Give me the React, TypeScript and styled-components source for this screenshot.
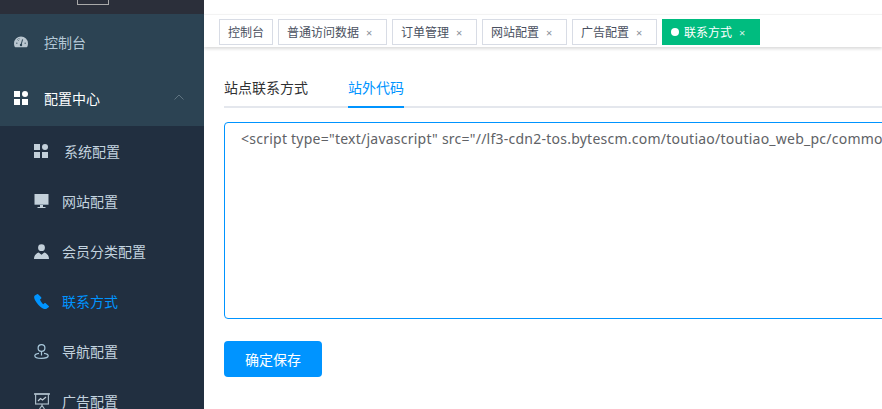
import { ReactNode } from 'react';
import styled, { createGlobalStyle } from 'styled-components';

const GlobalStyle = createGlobalStyle`
  html, body {
    margin: 0;
    padding: 0;
    height: 100%;
    overflow: hidden;
    background: #fff;
  }
  * {
    box-sizing: border-box;
  }
  body {
    font-family: 'Noto Sans', 'Noto Sans CJK SC', sans-serif;
  }
`;

const Page = styled.div`
  display: flex;
  width: 882px;
  height: 409px;
  overflow: hidden;
`;

const Sidebar = styled.aside`
  display: flex;
  flex-direction: column;
  flex: 0 0 204px;
  height: 409px;
  overflow: hidden;
  background: #212f40;
`;

const LogoStrip = styled.div`
  display: flex;
  justify-content: center;
  flex: 0 0 14px;
  background: #2b2f3a;
`;

const LogoEdge = styled.div`
  width: 32px;
  height: 5px;
  margin-right: 18px;
  border: 1px solid #a9a9a9;
  border-top: none;
`;

const TopGroup = styled.div`
  display: flex;
  flex-direction: column;
  flex: 0 0 112px;
  background: #2c4353;
`;

const TopItem = styled.div<{ $active?: boolean }>`
  display: flex;
  align-items: center;
  height: 56px;
  padding-left: 14px;
  font-size: 14px;
  color: ${(p) => (p.$active ? '#ffffff' : '#b4c8d6')};
`;

const TopIcon = styled.span`
  display: flex;
  flex: 0 0 30px;
`;

const Chevron = styled.svg`
  margin: -3px 0 0 74px;
`;

const SubList = styled.div`
  display: flex;
  flex-direction: column;
`;

const SubItem = styled.div<{ $active?: boolean; $gap?: number }>`
  display: flex;
  flex: 0 0 50px;
  align-items: center;
  padding-left: 34px;
  gap: ${(p) => p.$gap ?? 14}px;
  font-size: 14px;
  color: ${(p) => (p.$active ? '#0094ff' : '#c3d3df')};
`;

const Main = styled.main`
  display: flex;
  flex-direction: column;
  flex: 1;
  min-width: 0;
`;

const HeaderStrip = styled.div`
  flex: 0 0 14px;
  background: #fff;
`;

const TagBar = styled.nav`
  display: flex;
  flex: 0 0 33px;
  align-items: flex-start;
  gap: 5px;
  padding: 4px 0 0 15px;
  background: #fff;
  border-top: 1px solid #f3f3f3;
  box-shadow: 0 2px 3px rgba(0, 0, 0, 0.14);
`;

const Tag = styled.div<{ $active?: boolean }>`
  display: flex;
  align-items: center;
  height: 26px;
  padding: 0 8px;
  font-size: 12px;
  white-space: nowrap;
  color: ${(p) => (p.$active ? '#ffffff' : '#495060')};
  background: ${(p) => (p.$active ? '#00bc7f' : '#ffffff')};
  border: 1px solid ${(p) => (p.$active ? '#00bc7f' : '#d8dce5')};
`;

const TagDot = styled.span`
  width: 8px;
  height: 8px;
  margin-right: 5px;
  border-radius: 50%;
  background: #fff;
`;

const TagClose = styled.span<{ $active?: boolean }>`
  width: 6px;
  margin: 0 6px 0 7px;
  font-size: 11px;
  text-align: center;
  color: ${(p) => (p.$active ? '#d5f3e8' : '#8a9099')};
`;

const Content = styled.section`
  display: flex;
  flex-direction: column;
  padding: 26px 0 0 20px;
`;

const TabRow = styled.div`
  display: flex;
  gap: 40px;
  width: 658px;
  height: 35px;
  border-bottom: 2px solid #e4e7ed;
`;

const TabItem = styled.div<{ $active?: boolean }>`
  height: 35px;
  font-size: 14px;
  line-height: 30px;
  color: ${(p) => (p.$active ? '#0094ff' : '#303133')};
  border-bottom: 2px solid ${(p) => (p.$active ? '#0094ff' : 'transparent')};
`;

const CodeBox = styled.div`
  width: 700px;
  height: 197px;
  margin-top: 14px;
  padding: 5px 16px;
  overflow: hidden;
  font-size: 14px;
  line-height: 21px;
  letter-spacing: 0.24px;
  white-space: nowrap;
  color: #606266;
  border: 1px solid #0094ff;
  border-radius: 4px;
`;

const SaveButton = styled.button`
  width: 98px;
  height: 36px;
  margin-top: 22px;
  padding: 0;
  font-family: inherit;
  font-size: 14px;
  color: #fff;
  background: #0094ff;
  border: none;
  border-radius: 4px;
`;

const GridIcon = ({ color, size = 14 }: { color: string; size?: number }) => (
  <svg width={size} height={size} viewBox="0 0 14 14" fill={color}>
    <rect x="0" y="0" width="6" height="6" />
    <circle cx="11" cy="3" r="3" />
    <rect x="0" y="8" width="6" height="6" />
    <rect x="8" y="8" width="6" height="6" />
  </svg>
);

const GaugeIcon = () => (
  <svg width="14" height="12" viewBox="0 0 14 12">
    <path
      d="M7 0.5A7 7 0 0 0 0 7.5c0 1.2.2 2.3.7 3.3.1.3.4.5.7.5h11.2c.3 0 .6-.2.7-.5.5-1 .7-2.1.7-3.3A7 7 0 0 0 7 .5z"
      fill="#b9c6cf"
    />
    <path d="M7 9L8.6 3.4M3.6 3.6l.8.9M2.2 7.2h1.2M10.6 7.2h1.2M4.9 2.4l.3.8" stroke="#2c4353" strokeWidth="1" fill="none" />
    <circle cx="7" cy="9" r="1.2" fill="#2c4353" />
  </svg>
);

const MonitorIcon = () => (
  <svg width="15" height="14" viewBox="0 0 15 14" fill="#c3d0da">
    <rect x="0.5" y="0" width="14" height="10" />
    <rect x="0.5" y="10" width="14" height="1" fill="#8fa0ae" />
    <rect x="6" y="11" width="3" height="2" />
    <rect x="3.5" y="13" width="8" height="1" />
  </svg>
);

const UserIcon = () => (
  <svg width="15" height="15" viewBox="0 0 15 15" fill="#c3d0da">
    <circle cx="7.5" cy="3.7" r="3.4" />
    <path d="M0 15c0-3.2 1.6-5.6 4.7-6.6l2.8 2.4 2.8-2.4c3.1 1 4.7 3.4 4.7 6.6z" />
  </svg>
);

const PhoneIcon = () => (
  <svg width="15" height="15" viewBox="0 0 15 15" fill="#0094ff">
    <path d="M3 .2L.8 1.4C-.3 2.2 0 4.4 1.4 6.8c1.5 2.6 4 5.6 6.6 7.3 1.6 1.1 3.5 1.3 4.5.6l2.1-1.4c.5-.4.5-1 .1-1.4l-3-2.6c-.4-.4-.9-.3-1.3 0l-1.1.9C8.3 9.6 6.6 7.4 6 5.6l1-.9c.4-.4.4-.9.2-1.4L4.4.6C4 0 3.5-.1 3 .2z" />
  </svg>
);

const PinIcon = () => (
  <svg width="15" height="15" viewBox="0 0 15 15" fill="none" stroke="#a9c9dc" strokeWidth="1.2">
    <circle cx="7.5" cy="4" r="3.4" />
    <path d="M7.5 7.4V11.5" />
    <path d="M5 9.4C2.4 9.8.8 10.6.8 11.7c0 1.4 3 2.6 6.7 2.6s6.7-1.2 6.7-2.6c0-1.1-1.6-1.9-4.2-2.3" />
  </svg>
);

const BoardIcon = () => (
  <svg width="16" height="16" viewBox="0 0 16 16" fill="none" stroke="#a9bac6" strokeWidth="1.2">
    <path d="M0 1h16" strokeWidth="1.6" />
    <rect x="1.6" y="1" width="12.8" height="10" />
    <path d="M4 8l2.5-2.5 2 1.5L12 4" stroke="#c3d0da" />
    <path d="M8 11v2M5.5 16L8 12.5 10.5 16" />
  </svg>
);

const subMenu: { label: string; icon: ReactNode; active?: boolean; gap?: number }[] = [
  { label: '系统配置', icon: <GridIcon color="#c3d0da" />, gap: 16 },
  { label: '网站配置', icon: <MonitorIcon />, gap: 13 },
  { label: '会员分类配置', icon: <UserIcon />, gap: 13 },
  { label: '联系方式', icon: <PhoneIcon />, active: true, gap: 13 },
  { label: '导航配置', icon: <PinIcon />, gap: 13 },
  { label: '广告配置', icon: <BoardIcon />, gap: 12 },
];

const tags = [
  { label: '控制台', fixed: true },
  { label: '普通访问数据' },
  { label: '订单管理' },
  { label: '网站配置' },
  { label: '广告配置' },
];

const App = () => (
  <Page>
    <GlobalStyle />
    <Sidebar>
      <LogoStrip>
        <LogoEdge />
      </LogoStrip>
      <TopGroup>
        <TopItem>
          <TopIcon>
            <GaugeIcon />
          </TopIcon>
          控制台
        </TopItem>
        <TopItem $active>
          <TopIcon>
            <GridIcon color="#ffffff" />
          </TopIcon>
          配置中心
          <Chevron width="10" height="6" viewBox="0 0 10 6" fill="none" stroke="#5f7380" strokeWidth="1">
            <path d="M0.5 5.5L5 1l4.5 4.5" />
          </Chevron>
        </TopItem>
      </TopGroup>
      <SubList>
        {subMenu.map((item) => (
          <SubItem key={item.label} $active={item.active} $gap={item.gap}>
            {item.icon}
            {item.label}
          </SubItem>
        ))}
      </SubList>
    </Sidebar>
    <Main>
      <HeaderStrip />
      <TagBar>
        {tags.map((tag) => (
          <Tag key={tag.label}>
            {tag.label}
            {!tag.fixed && <TagClose>×</TagClose>}
          </Tag>
        ))}
        <Tag $active>
          <TagDot />
          联系方式
          <TagClose $active>×</TagClose>
        </Tag>
      </TagBar>
      <Content>
        <TabRow>
          <TabItem>站点联系方式</TabItem>
          <TabItem $active>站外代码</TabItem>
        </TabRow>
        <CodeBox>
          {'<script type="text/javascript" src="//lf3-cdn2-tos.bytescm.com/toutiao/toutiao_web_pc/common/index.js"></script>'}
        </CodeBox>
        <div>
          <SaveButton>确定保存</SaveButton>
        </div>
      </Content>
    </Main>
  </Page>
);

export default App;
